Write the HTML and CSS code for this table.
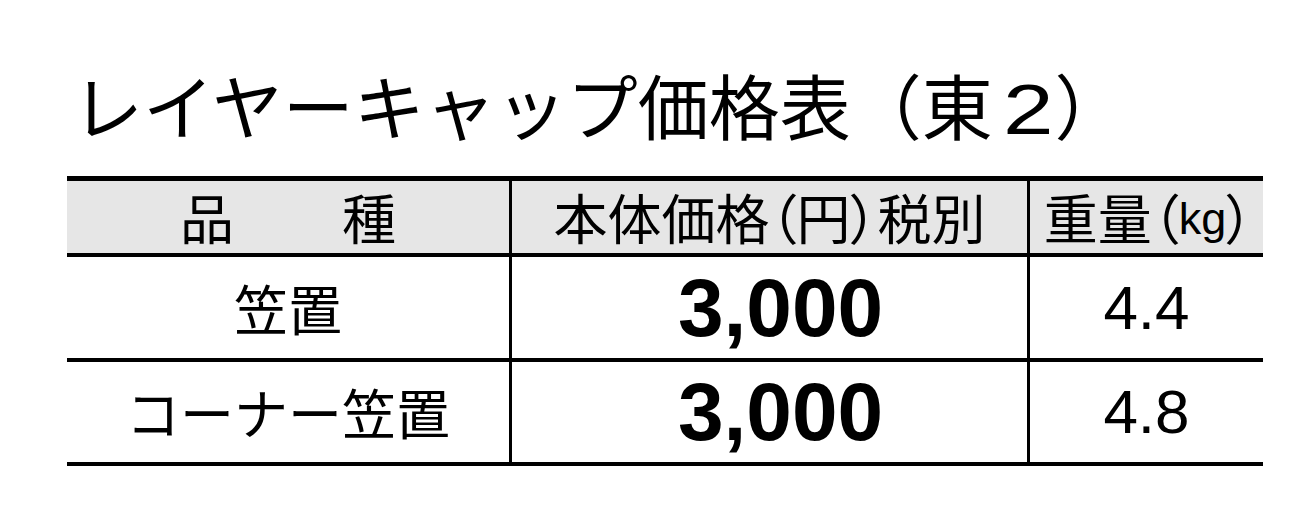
FILE: index.html
```html
<!DOCTYPE html>
<html lang="ja">
<head>
<meta charset="utf-8">
<title>レイヤーキャップ価格表（東2）</title>
<link rel="stylesheet" href="styles.css">
</head>
<body>
<h1 class="title">レイヤーキャップ価格表（東<span class="two">2</span>）</h1>
<div class="table">
  <div class="row head">
    <div class="cell c1">品　　種</div>
    <div class="cell c2 palt">本体価格（円）税別</div>
    <div class="cell c3 palt">重量（<span class="unit">kg</span>）</div>
  </div>
  <div class="row">
    <div class="cell c1 name">笠置</div>
    <div class="cell c2 price">3,000</div>
    <div class="cell c3 weight">4.4</div>
  </div>
  <div class="row">
    <div class="cell c1 name">コーナー笠置</div>
    <div class="cell c2 price">3,000</div>
    <div class="cell c3 weight">4.8</div>
  </div>
</div>
</body>
</html>
```
FILE: styles.css
```css
html, body {
  margin: 0;
  padding: 0;
  background: #ffffff;
  color: #000000;
}
body {
  font-family: "Noto Sans CJK JP", "Noto Sans", sans-serif;
}
.title {
  margin: 68px 0 0 72px;
  font-size: 71px;
  font-weight: 400;
  line-height: 71px;
  height: 71px;
  letter-spacing: 0;
  white-space: nowrap;
}
.two {
  display: inline-block;
  font-family: "Liberation Sans", Arial, sans-serif;
  transform: scaleX(1.28);
  transform-origin: left center;
  margin: 0 12px 0 10px;
}
.table {
  margin: 37px 0 0 67px;
  width: 1196px;
  border-top: 5px solid #000;
}
.row {
  display: grid;
  grid-template-columns: 445px 518px 233px;
  height: 101px;
  border-bottom: 4px solid #000;
}
.row:last-child {
  height: 100px;
}
.row.head {
  height: 72px;
  background: #e6e6e6;
}
.cell {
  display: flex;
  align-items: center;
  justify-content: center;
  line-height: 1;
  white-space: nowrap;
}
.c1, .c2 {
  border-right: 3px solid #000;
}
.head .cell {
  font-size: 54px;
}
.palt {
  font-feature-settings: "palt" 1;
}
.c3.palt {
  padding-left: 4px;
}
.unit {
  font-family: "Liberation Sans", Arial, sans-serif;
  font-size: 45px;
  position: relative;
  top: 1px;
}
.name {
  font-size: 54px;
}
.price {
  font-family: "Liberation Sans", Arial, sans-serif;
  font-weight: 700;
  font-size: 82px;
  padding-left: 22px;
}
.weight {
  font-family: "Liberation Sans", Arial, sans-serif;
  font-size: 62px;
}
```
